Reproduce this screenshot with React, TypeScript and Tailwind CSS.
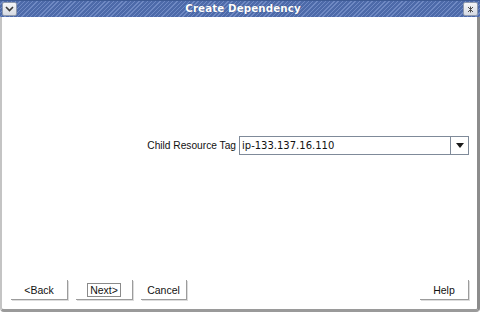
import { useState } from 'react';

const FONT = "font-['Liberation_Sans',Arial,sans-serif]";

const WizardButton = ({ label, width, focused = false }: { label: string; width: string; focused?: boolean }) => (
    <button
        type="button"
        className={`${width} h-[20px] bg-white border-r border-b border-[#9c9c9c] shadow-[1px_1px_0_#dcdcdc] text-[10.5px] text-[#111] flex items-center justify-center ${FONT}`}
    >
        <span className={focused ? 'px-[2px] leading-[12px] border border-[#8a8a8a]' : 'px-[3px] leading-[12px] border border-transparent'}>
            {label}
        </span>
    </button>
);

export default function App() {
    const [tag] = useState('ip-133.137.16.110');

    return (
        <div className={`w-[480px] h-[312px] flex flex-col bg-white overflow-hidden ${FONT}`}>
            {/* title bar */}
            <div className="h-[17px] flex items-center px-[2px] border-t border-[#3d5a94] bg-[repeating-linear-gradient(135deg,#4d6aa9_0px,#4d6aa9_2px,#6f89c3_2px,#6f89c3_3px)]">
                <div className="w-[15px] h-[14px] rounded-[2px] border border-[#8e99ad] bg-gradient-to-b from-[#f4f5f8] to-[#d7dbe3] flex items-center justify-center">
                    <svg width="9" height="6" viewBox="0 0 9 6">
                        <path d="M1 1 L4.5 4.5 L8 1" fill="none" stroke="#3a3a3a" strokeWidth="1.6" />
                    </svg>
                </div>
                <div className="flex-1 pl-[6px] text-center text-white font-bold text-[10.3px] font-['DejaVu_Sans',sans-serif] tracking-[0.1px] [text-shadow:0_0_1px_#2b4070]">
                    Create Dependency
                </div>
                <div className="w-[15px] h-[14px] rounded-[2px] border border-[#8e99ad] bg-gradient-to-b from-[#f4f5f8] to-[#d7dbe3] flex items-center justify-center">
                    <svg width="7" height="7" viewBox="0 0 7 7">
                        <path d="M1 1 L6 6 M6 1 L1 6 M3.5 0.5 L3.5 6.5" fill="none" stroke="#4a4a4a" strokeWidth="1" />
                    </svg>
                </div>
            </div>

            {/* body */}
            <div className="flex-1 flex flex-col border-l-2 border-l-[#c4c4c4] border-r-[3px] border-r-[#8c8c8c] border-b-[3px] border-b-[#9a9a9a] rounded-b-[4px]">
                <div className="flex-1 flex items-center justify-end pr-[8px] pb-[1px]">
                    <span className="text-[10.2px] text-[#111] mr-[3px]">Child Resource Tag</span>
                    <div className="w-[230px] h-[19px] flex border border-[#7f8a99] bg-white">
                        <div className="flex-1 flex items-center pl-[2px] text-[10px] text-[#111] font-['DejaVu_Sans',sans-serif]">{tag}</div>
                        <div className="w-[18px] border-l border-[#7f8a99] flex items-center justify-center">
                            <svg width="8" height="5" viewBox="0 0 8 5">
                                <path d="M0 0 L8 0 L4 5 Z" fill="#1a1a1a" />
                            </svg>
                        </div>
                    </div>
                </div>

                <div className="h-[34px] flex items-start pt-[5px] pl-[9px] pr-[8px]">
                    <div className="flex gap-[8px]">
                        <WizardButton label="<Back" width="w-[57px]" />
                        <WizardButton label="Next>" width="w-[57px]" focused />
                        <WizardButton label="Cancel" width="w-[46px]" />
                    </div>
                    <div className="flex-1" />
                    <WizardButton label="Help" width="w-[49px]" />
                </div>
            </div>
        </div>
    );
}
